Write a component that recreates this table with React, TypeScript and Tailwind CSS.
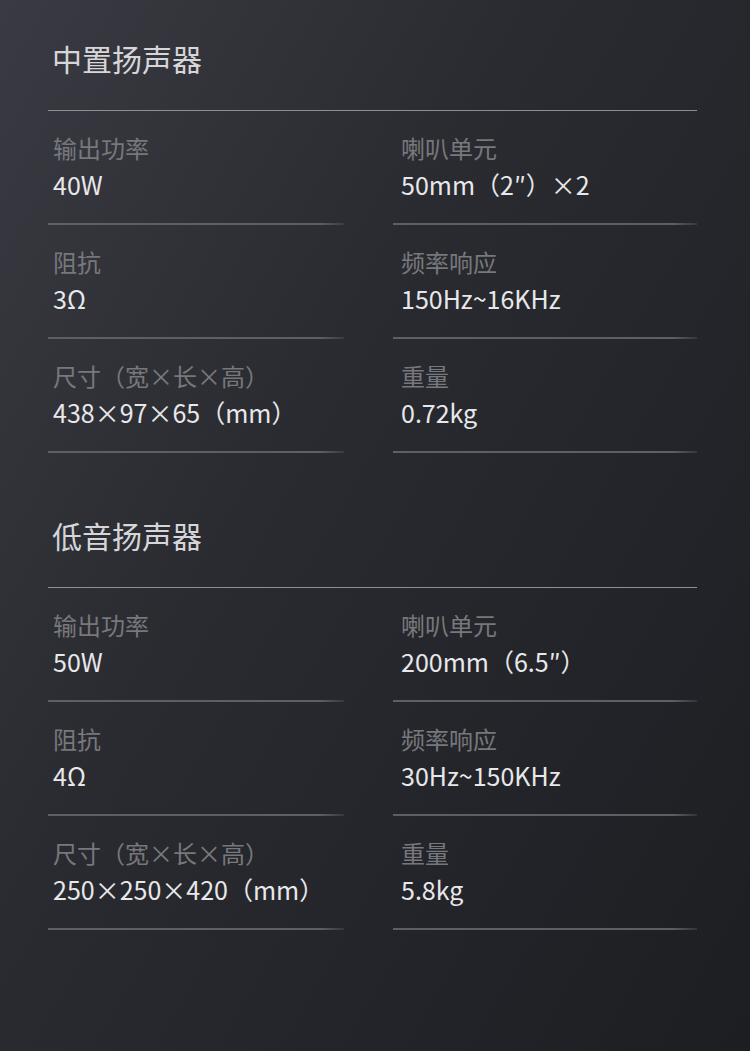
const sections = [
  {
    title: '中置扬声器',
    rows: [
      [
        { label: '输出功率', value: '40W' },
        { label: '喇叭单元', value: '50mm（2″）×2' },
      ],
      [
        { label: '阻抗', value: '3Ω' },
        { label: '频率响应', value: '150Hz~16KHz' },
      ],
      [
        { label: '尺寸（宽×长×高）', value: '438×97×65（mm）' },
        { label: '重量', value: '0.72kg' },
      ],
    ],
  },
  {
    title: '低音扬声器',
    rows: [
      [
        { label: '输出功率', value: '50W' },
        { label: '喇叭单元', value: '200mm（6.5″）' },
      ],
      [
        { label: '阻抗', value: '4Ω' },
        { label: '频率响应', value: '30Hz~150KHz' },
      ],
      [
        { label: '尺寸（宽×长×高）', value: '250×250×420（mm）' },
        { label: '重量', value: '5.8kg' },
      ],
    ],
  },
];

export default function App() {
  return (
    <div
      className="w-[750px] h-[1051px] overflow-hidden bg-[linear-gradient(120deg,#3a3b42_0%,#2a2b31_40%,#1d1e22_100%)] px-12 pt-[37px]"
      style={{ fontFamily: '"Noto Sans CJK SC", "Noto Sans", sans-serif' }}
    >
      {sections.map((s, i) => (
        <Section key={s.title} title={s.title} rows={s.rows} first={i === 0} />
      ))}
    </div>
  );
}

function Section({ title, rows, first }: { title: string; rows: { label: string; value: string }[][]; first: boolean }) {
  return (
    <div className={first ? '' : 'mt-[61px]'}>
      <p className="pl-1 text-[30px] leading-[42px] text-[#d6d6da]">{title}</p>
      <div className="mt-[31px] h-px w-[649px] bg-[#8e8e92]" />
      <div className="grid grid-cols-[296px_304px] gap-x-[49px]">
        {rows.flat().map((c, idx) => (
          <Cell key={c.label + idx} label={c.label} value={c.value} right={idx % 2 === 1} />
        ))}
      </div>
    </div>
  );
}

function Cell({ label, value, right }: { label: string; value: string; right: boolean }) {
  return (
    <div className="flex flex-col">
      <div className={`pt-[19px] pb-[21px] ${right ? 'pl-2' : 'pl-[5px]'}`}>
        <p className="text-[24px] leading-[36px] text-[#77787c]">{label}</p>
        <p className="text-[25px] leading-[36px] text-[#e8e8ea]">{value}</p>
      </div>
      <div className="h-[2px] bg-[linear-gradient(90deg,#5e5f64_0%,#5e5f64_92%,rgba(94,95,100,0.3)_100%)]" />
    </div>
  );
}
